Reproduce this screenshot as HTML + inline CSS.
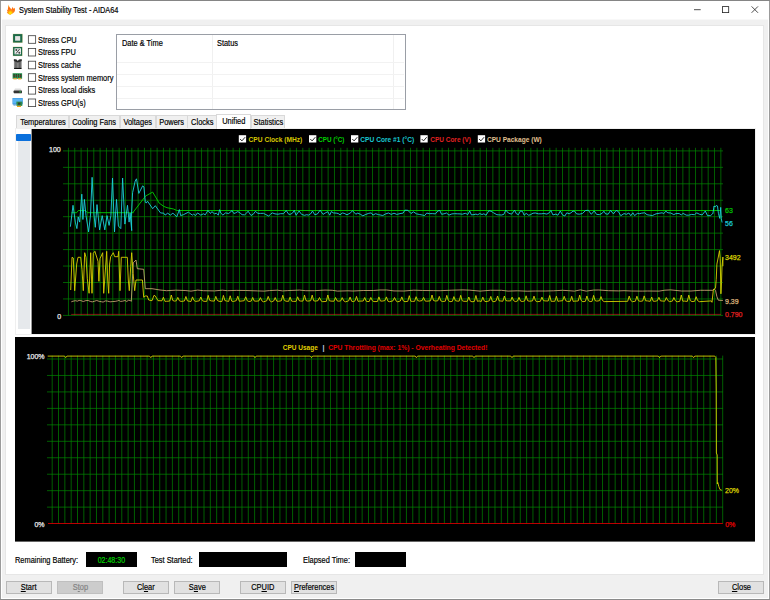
<!DOCTYPE html>
<html><head><meta charset="utf-8"><title>System Stability Test - AIDA64</title><style>
html,body{margin:0;padding:0}
body{width:770px;height:600px;position:relative;overflow:hidden;background:#f0f0f0;font-family:"Liberation Sans",sans-serif;font-size:8.2px;color:#000;-webkit-text-stroke:0.18px #000}
.a{position:absolute}
.t{position:absolute;white-space:nowrap;line-height:10px;height:10px;transform:scaleX(0.905);transform-origin:0 0}
.btn span,.tab span{display:inline-block;transform:scaleX(0.91);transform-origin:50% 50%}
.cb{position:absolute;width:6px;height:6px;border:1px solid #5a5a5a;background:#fff;box-sizing:content-box}
.btn{position:absolute;box-sizing:border-box;height:13px;top:581px;border:1px solid #b8b8b8;background:#e1e1e1;text-align:center;line-height:12.6px;white-space:nowrap}
.tab{position:absolute;box-sizing:border-box;top:115px;height:13px;border:1px solid #d9d9d9;border-bottom:none;background:#f0f0f0;text-align:center;line-height:13px;white-space:nowrap}
u{text-decoration:underline;text-decoration-thickness:0.7px;text-underline-offset:0.8px}
</style></head><body>
<div class="a" style="left:0;top:0;width:770px;height:600px;background:#9b9b9b"></div>
<div class="a" style="left:0;top:0;width:770px;height:1px;background:#858585"></div>
<div class="a" style="left:1px;top:1px;width:768px;height:598px;background:#fff"></div>
<div class="a" style="left:2px;top:19px;width:766px;height:1px;background:#f8f8f8"></div>
<div class="a" style="left:2px;top:20px;width:766px;height:578px;background:#f0f0f0"></div>
<div class="a" style="left:0;top:599px;width:770px;height:1px;background:#8a8a8a"></div>
<svg class="a" style="left:0;top:0" width="20" height="20" viewBox="0 0 20 20"><defs><radialGradient id="fl" gradientUnits="userSpaceOnUse" cx="10.3" cy="13" r="8"><stop offset="0" stop-color="#ffe800"/><stop offset="0.14" stop-color="#ffd400"/><stop offset="0.33" stop-color="#ff8a14"/><stop offset="0.6" stop-color="#ff6a14"/><stop offset="0.85" stop-color="#ff9a24"/><stop offset="1" stop-color="#ffb040"/></radialGradient></defs><path d="M8.1 4.6 L9.7 7.3 L11.4 9.4 L12.6 6.7 L13.4 8.7 L14.8 7.7 C15.1 9 15.1 10.2 14.8 11 C14.4 12.4 13 13.5 11.6 14 L10.2 14.9 C8.9 14.5 7.8 13.6 7.3 12.7 L6.8 12.4 L7.6 11.4 L6.8 9.6 L8 10 C7.7 8.4 8.4 6.4 8.1 4.6 Z" fill="url(#fl)"/></svg>
<div class="t" style="left:18.6px;top:6px;transform:scaleX(0.9)">System Stability Test - AIDA64</div>
<svg class="a" style="left:690px;top:2px" width="76" height="16" viewBox="0 0 76 16"><g stroke="#222" stroke-width="0.8" fill="none"><path d="M4 7.7H10.7"/><rect x="32.5" y="4.6" width="6.2" height="6"/><path d="M61.6 4.4L68 10.8M68 4.4L61.6 10.8"/></g></svg>
<div class="a" style="left:5px;top:25px;width:759px;height:550px;background:#fff;box-sizing:border-box;border:1px solid #e6e6e6"></div>
<svg class="a" style="left:0;top:0" width="130" height="112" viewBox="0 0 130 112"><rect x="12.8" y="33.8" width="9.8" height="9" fill="#d8c890"/><rect x="13.1" y="34.1" width="9.2" height="8.4" fill="#1c6a48"/><rect x="15.1" y="36.1" width="5.1" height="4.6" fill="#e4e4e4"/><rect x="12.8" y="46.7" width="9.6" height="9.4" fill="#d8c890"/><rect x="13.1" y="47" width="9" height="8.8" fill="#1c6a48"/><rect x="14.5" y="48.3" width="6.5" height="6" fill="#ececec"/><path d="M16 53.6L19.6 49" stroke="#333" stroke-width="0.9"/><circle cx="16.3" cy="50" r="1" fill="#444"/><circle cx="19.3" cy="52.8" r="1" fill="#444"/><defs><linearGradient id="cg" x1="0" x2="1" y1="0" y2="0"><stop offset="0" stop-color="#9a9a9a"/><stop offset="0.25" stop-color="#5e5e5e"/><stop offset="0.5" stop-color="#8a8a8a"/><stop offset="0.75" stop-color="#5a5a5a"/><stop offset="1" stop-color="#8c8c8c"/></linearGradient></defs><path d="M13.9 59.2 L16.4 60 L17.8 61.4 L19.2 60 L21.7 59.2 V68.6 H13.9Z" fill="url(#cg)"/><path d="M13.9 59.2 L16.6 59.4 L17.8 61 L19 59.4 L21.7 59.2 V60.9 L17.8 62.4 L13.9 60.9Z" fill="#2a2a2a"/><rect x="14.1" y="67.9" width="7.4" height="1.1" fill="#101010"/><rect x="12.6" y="73.2" width="9.5" height="5.6" fill="#2c9450"/><rect x="13.5" y="74.1" width="1.3" height="3.3" fill="#23402c"/><rect x="13.8" y="75" width="0.7" height="1.6" fill="#7a3028"/><rect x="15.7" y="74.1" width="1.3" height="3.3" fill="#23402c"/><rect x="16.0" y="75" width="0.7" height="1.6" fill="#7a3028"/><rect x="17.9" y="74.1" width="1.3" height="3.3" fill="#23402c"/><rect x="18.2" y="75" width="0.7" height="1.6" fill="#7a3028"/><rect x="20.1" y="74.1" width="1.3" height="3.3" fill="#23402c"/><rect x="20.4" y="75" width="0.7" height="1.6" fill="#7a3028"/><rect x="13.4" y="78" width="3.3" height="1.4" fill="#d9a63c"/><rect x="18" y="78" width="3.3" height="1.4" fill="#d9a63c"/><path d="M13.8 91 L15 88.6 H20.6 L21.9 91Z" fill="#dcdcdc"/><rect x="13.6" y="90.6" width="8.4" height="2.7" rx="0.7" fill="#333"/><rect x="19.3" y="91.3" width="1.8" height="1.2" fill="#2ea84a"/><rect x="14" y="93.2" width="7.6" height="0.6" fill="#bbb"/><rect x="12.5" y="98" width="10.2" height="6.4" fill="#2f8fe0"/><rect x="13" y="98.4" width="9.2" height="5.2" fill="#5ab4f4"/><path d="M13 104.4h3.2l-0.6 1h-2Z" fill="#3a86c8"/><rect x="16.4" y="101.6" width="5.9" height="4.3" fill="#2d8a4e"/><rect x="18" y="102.6" width="2.4" height="2.1" fill="#333c33"/><rect x="17" y="105.8" width="4" height="1.2" fill="#f0a418"/><rect x="28.35" y="35.70" width="7.3" height="7.6" fill="#fff" stroke="#3c3c3c" stroke-width="0.8"/><rect x="28.35" y="48.40" width="7.3" height="7.6" fill="#fff" stroke="#3c3c3c" stroke-width="0.8"/><rect x="28.35" y="61.20" width="7.3" height="7.6" fill="#fff" stroke="#3c3c3c" stroke-width="0.8"/><rect x="28.35" y="73.70" width="7.3" height="7.6" fill="#fff" stroke="#3c3c3c" stroke-width="0.8"/><rect x="28.35" y="86.50" width="7.3" height="7.6" fill="#fff" stroke="#3c3c3c" stroke-width="0.8"/><rect x="28.35" y="99.00" width="7.3" height="7.6" fill="#fff" stroke="#3c3c3c" stroke-width="0.8"/></svg>
<div class="t" style="left:37.6px;top:36px">Stress CPU</div>
<div class="t" style="left:37.6px;top:48px">Stress FPU</div>
<div class="t" style="left:37.6px;top:61px">Stress cache</div>
<div class="t" style="left:37.6px;top:74px">Stress system memory</div>
<div class="t" style="left:37.6px;top:86px">Stress local disks</div>
<div class="t" style="left:37.6px;top:99px">Stress GPU(s)</div>
<div class="a" style="left:116px;top:34px;width:290px;height:76px;box-sizing:border-box;border:1px solid #9a9ea6;background:#fff"></div>
<div class="a" style="left:212px;top:35px;width:1px;height:74px;background:#f0f0f0"></div>
<div class="a" style="left:393px;top:35px;width:1px;height:74px;background:#f0f0f0"></div>
<div class="a" style="left:117px;top:62px;width:287px;height:1px;background:#f2f2f2"></div>
<div class="a" style="left:117px;top:74px;width:287px;height:1px;background:#f2f2f2"></div>
<div class="a" style="left:117px;top:86px;width:287px;height:1px;background:#f2f2f2"></div>
<div class="a" style="left:117px;top:98px;width:287px;height:1px;background:#f2f2f2"></div>
<div class="t" style="left:122px;top:39px">Date &amp; Time</div>
<div class="t" style="left:217px;top:39px">Status</div>
<div class="a" style="left:15px;top:127.5px;width:741px;height:207px;box-sizing:border-box;border:1px solid #efefef;background:#fff"></div>
<div class="tab" style="left:16.4px;width:52.7px"><span>Temperatures</span></div>
<div class="tab" style="left:68.5px;width:51.9px"><span>Cooling Fans</span></div>
<div class="tab" style="left:119.8px;width:36.4px"><span>Voltages</span></div>
<div class="tab" style="left:155.6px;width:32.0px"><span>Powers</span></div>
<div class="tab" style="left:187.0px;width:30.2px"><span>Clocks</span></div>
<div class="tab" style="left:216.1px;width:35.0px;top:114px;height:14.5px;background:#fff;line-height:14.5px"><span>Unified</span></div>
<div class="tab" style="left:250.6px;width:34.7px"><span>Statistics</span></div>
<div class="a" style="left:18px;top:134px;width:12px;height:195px;background:#e6e9ec"></div>
<div class="a" style="left:16px;top:134px;width:15px;height:7px;background:#0b70dc;border-radius:0.8px"></div>
<svg class="a" style="left:0;top:0" width="770" height="600" viewBox="0 0 770 600">
<rect x="31.6" y="129" width="723.4" height="205" fill="#000"/>
<path d="M68.45 147.8V315.6M74.78 147.8V315.6M81.12 147.8V315.6M87.45 147.8V315.6M93.79 147.8V315.6M100.12 147.8V315.6M106.45 147.8V315.6M112.79 147.8V315.6M119.12 147.8V315.6M125.46 147.8V315.6M131.79 147.8V315.6M138.12 147.8V315.6M144.46 147.8V315.6M150.79 147.8V315.6M157.13 147.8V315.6M163.46 147.8V315.6M169.79 147.8V315.6M176.13 147.8V315.6M182.46 147.8V315.6M188.80 147.8V315.6M195.13 147.8V315.6M201.46 147.8V315.6M207.80 147.8V315.6M214.13 147.8V315.6M220.47 147.8V315.6M226.80 147.8V315.6M233.13 147.8V315.6M239.47 147.8V315.6M245.80 147.8V315.6M252.14 147.8V315.6M258.47 147.8V315.6M264.80 147.8V315.6M271.14 147.8V315.6M277.47 147.8V315.6M283.81 147.8V315.6M290.14 147.8V315.6M296.47 147.8V315.6M302.81 147.8V315.6M309.14 147.8V315.6M315.48 147.8V315.6M321.81 147.8V315.6M328.14 147.8V315.6M334.48 147.8V315.6M340.81 147.8V315.6M347.15 147.8V315.6M353.48 147.8V315.6M359.81 147.8V315.6M366.15 147.8V315.6M372.48 147.8V315.6M378.82 147.8V315.6M385.15 147.8V315.6M391.48 147.8V315.6M397.82 147.8V315.6M404.15 147.8V315.6M410.49 147.8V315.6M416.82 147.8V315.6M423.15 147.8V315.6M429.49 147.8V315.6M435.82 147.8V315.6M442.16 147.8V315.6M448.49 147.8V315.6M454.82 147.8V315.6M461.16 147.8V315.6M467.49 147.8V315.6M473.83 147.8V315.6M480.16 147.8V315.6M486.49 147.8V315.6M492.83 147.8V315.6M499.16 147.8V315.6M505.50 147.8V315.6M511.83 147.8V315.6M518.16 147.8V315.6M524.50 147.8V315.6M530.83 147.8V315.6M537.17 147.8V315.6M543.50 147.8V315.6M549.83 147.8V315.6M556.17 147.8V315.6M562.50 147.8V315.6M568.84 147.8V315.6M575.17 147.8V315.6M581.50 147.8V315.6M587.84 147.8V315.6M594.17 147.8V315.6M600.51 147.8V315.6M606.84 147.8V315.6M613.17 147.8V315.6M619.51 147.8V315.6M625.84 147.8V315.6M632.18 147.8V315.6M638.51 147.8V315.6M644.84 147.8V315.6M651.18 147.8V315.6M657.51 147.8V315.6M663.85 147.8V315.6M670.18 147.8V315.6M676.51 147.8V315.6M682.85 147.8V315.6M689.18 147.8V315.6M695.52 147.8V315.6M701.85 147.8V315.6M708.18 147.8V315.6M714.52 147.8V315.6M720.85 147.8V315.6M63 150.90H723M63 167.35H723M63 183.80H723M63 200.25H723M63 216.70H723M63 233.15H723M63 249.60H723M63 266.05H723M63 282.50H723M63 298.95H723M63 315.40H723" stroke="#008600" stroke-width="0.7" fill="none"/>
<path d="M71.2 314.4H721" stroke="#c82020" stroke-width="0.65" fill="none"/>
<polyline points="71.4,212.7 76.6,212.7 78.4,210.5 85.3,210.5 87.5,212.7 133.4,212.7 133.2,212.2 145.6,196.0 152.7,192.1 159.2,203.1 163.8,206.4 167.0,207.7 173.5,209.0 176.8,210.5 721.0,210.5" stroke="#00dc00" stroke-width="0.85" fill="none" stroke-linejoin="round"/>
<polyline points="70.4,226.7 73.0,205.3 75.3,222.1 76.9,228.6 78.2,216.9 79.7,222.1 81.8,194.2 82.9,219.5 84.4,199.4 86.0,215.6 88.6,231.9 90.5,215.0 92.1,177.3 94.0,215.0 95.3,227.3 97.0,204.6 99.6,229.9 102.2,215.6 104.8,229.9 107.0,215.6 109.1,225.4 110.9,215.6 112.5,178.0 114.5,231.9 116.5,199.4 118.4,226.0 120.8,228.6 122.6,178.0 124.9,224.1 127.5,205.3 129.1,222.1 130.1,213.1 131.7,230.6 131.3,218.1 132.6,192.7 135.2,181.0 136.5,178.8 138.8,193.4 142.7,185.8 143.9,186.9 145.3,201.8 146.2,203.1 147.5,201.2 152.7,208.7 155.3,205.7 160.5,212.9 163.8,213.2 165.1,215.1 167.7,213.2 170.3,215.1 172.9,213.2 176.8,216.8 179.4,209.6 180.6,215.5 183.2,214.8 188.4,212.2 192.3,215.1 193.6,214.2 195.6,215.5 197.5,212.9 200.8,215.1 203.4,213.8 205.3,214.8 207.9,210.5 210.5,213.5 211.8,211.6 214.4,213.8 216.4,213.2 218.3,215.2 219.6,209.7 220.9,213.2 222.9,215.1 225.5,212.9 228.7,213.5 232.1,210.6 233.8,213.5 235.5,212.9 237.8,211.6 240.1,213.0 242.1,214.7 244.6,214.8 246.3,213.4 248.1,211.2 251.0,215.5 253.6,213.9 255.3,211.4 258.0,213.4 260.5,213.4 263.4,213.3 265.9,214.6 268.7,216.0 270.5,214.3 272.3,212.9 275.0,213.9 278.0,214.2 280.6,213.7 283.5,213.7 286.2,210.5 288.8,214.4 290.8,214.1 292.5,213.1 294.3,210.4 296.1,215.3 299.1,211.0 301.6,214.4 304.5,215.3 306.7,214.7 308.5,215.1 310.5,214.0 312.5,211.0 314.7,214.7 317.4,214.0 320.1,210.2 323.0,214.4 325.2,213.0 327.8,211.7 329.7,215.2 331.4,211.5 333.2,212.9 336.2,213.1 338.2,213.5 340.0,214.8 342.3,213.0 344.1,213.3 347.0,214.8 350.1,213.1 352.6,210.8 355.8,214.2 357.8,213.1 360.6,214.4 362.8,215.8 365.9,214.4 368.8,213.3 371.3,212.9 372.9,215.1 375.6,213.7 378.7,214.7 380.9,215.1 382.8,215.5 385.9,213.8 388.5,213.0 391.2,214.4 394.0,213.2 396.8,214.4 400.0,213.6 403.1,213.1 404.9,210.2 407.8,210.3 411.0,213.5 413.4,211.8 416.6,213.9 419.7,214.5 422.6,215.1 424.7,215.5 426.7,213.1 429.7,213.7 432.3,213.6 435.4,213.9 437.8,211.0 439.7,210.4 441.6,214.3 444.0,213.8 446.5,213.0 449.0,215.1 451.9,213.9 454.7,213.7 457.3,213.8 460.0,213.9 462.3,214.2 465.3,213.3 467.8,214.5 469.7,211.0 471.4,214.9 474.0,214.6 475.9,214.1 477.7,214.7 479.7,213.6 482.0,214.5 483.9,213.8 486.0,215.2 488.8,210.8 491.1,211.2 493.7,212.9 496.9,214.7 498.7,214.8 501.5,215.0 503.8,214.4 505.8,210.1 508.3,213.0 510.0,213.7 511.7,214.1 514.6,210.3 516.3,213.7 518.4,214.7 520.5,210.9 522.5,211.5 524.1,215.2 526.2,213.4 528.6,215.2 530.2,214.8 533.0,213.2 535.4,213.0 538.3,213.8 541.2,213.8 543.9,213.5 546.9,214.1 549.1,212.9 550.9,210.5 552.9,214.9 555.9,214.1 557.9,215.2 560.3,211.0 562.3,214.7 564.8,216.0 566.8,212.8 569.1,213.8 571.0,212.8 573.0,211.1 574.7,211.3 576.6,213.9 579.4,214.2 582.4,213.5 585.6,210.5 588.3,210.3 591.3,214.3 594.2,210.9 596.6,214.4 599.5,214.6 602.2,213.3 603.9,211.2 605.6,213.9 608.2,214.2 610.6,210.4 613.4,213.9 616.1,210.5 618.1,211.3 620.8,215.7 624.0,213.6 626.4,214.3 628.9,213.0 630.8,215.7 632.9,212.8 634.6,215.6 637.3,213.4 639.7,213.7 641.5,213.2 644.7,212.8 647.0,214.7 649.3,215.1 652.4,215.5 654.2,214.7 656.1,213.8 659.1,213.3 662.1,212.8 663.7,213.7 665.8,211.2 667.9,212.8 670.7,213.0 673.8,214.6 675.9,213.6 679.1,213.5 681.3,214.9 683.1,213.4 686.2,215.1 688.6,215.2 691.7,214.4 694.4,214.7 696.8,212.9 699.6,214.3 702.2,214.9 705.3,211.0 707.5,215.7 710.6,215.6 712.7,213.6 712.9,213.8 714.0,206.0 715.2,206.9 716.1,205.5 717.5,206.0 718.4,213.3 719.8,218.4 720.7,207.4 721.3,218.8 722.1,222.5" stroke="#1cd0da" stroke-width="0.9" fill="none" stroke-linejoin="round"/>
<polyline points="71.3,301.8 73.0,301.2 75.5,300.7 77.3,301.2 79.1,300.4 80.8,300.6 83.3,301.5 85.8,300.6 88.2,300.5 90.3,301.4 92.2,301.9 94.3,301.3 96.7,300.5 99.3,301.4 101.3,301.7 103.1,302.1 105.2,300.9 107.5,301.1 109.2,301.6 110.8,301.8 112.6,301.5 115.2,301.4 117.4,300.9 118.9,300.4 120.5,301.4 122.5,301.2 125.0,300.5 126.8,301.5 128.3,300.3 130.2,300.5 131.3,301.3 132.7,273.3 133.3,262.7 136.0,260.0 137.3,268.7 143.7,269.3 145.3,288.7 152.0,288.7 160.0,290.0 166.6,290.7 175.7,290.2 185.1,290.5 191.0,291.1 197.7,290.1 203.4,290.7 214.5,290.9 222.3,290.2 227.4,290.7 236.3,290.4 245.8,290.5 257.4,290.9 264.1,291.1 269.4,290.6 277.3,290.2 282.7,290.9 287.8,290.6 299.4,290.1 305.8,290.7 314.3,290.7 325.0,290.1 332.2,290.3 337.5,291.1 348.0,290.8 353.0,291.0 363.2,290.5 373.4,290.5 380.0,290.0 386.6,290.0 394.0,290.9 403.9,291.0 413.8,290.2 422.7,290.5 433.2,290.6 440.1,290.7 451.9,290.2 463.0,289.9 469.8,290.2 480.0,291.1 490.3,290.3 501.4,290.3 508.1,291.1 517.5,290.8 527.2,291.2 535.5,291.0 545.3,291.0 553.4,290.8 562.4,290.3 568.9,290.7 574.4,291.1 580.4,289.9 586.2,291.1 593.6,290.1 598.8,290.0 608.6,290.7 618.5,290.9 624.0,290.7 631.5,291.0 642.3,291.1 647.7,291.0 659.1,291.1 664.9,290.2 670.7,289.9 681.6,291.0 691.0,291.0 700.5,290.3 704.2,290.3 712.7,290.3 714.1,288.9 715.5,290.3 716.9,296.7 718.3,300.2 722.9,300.5" stroke="#dcb47c" stroke-width="0.8" fill="none" stroke-linejoin="round"/>
<polyline points="70.7,290.0 72.0,257.3 73.3,258.0 74.7,290.7 76.7,264.0 78.0,257.3 80.7,257.3 82.0,269.3 83.3,290.7 84.7,252.7 86.0,257.3 87.3,278.7 89.1,293.3 90.7,252.7 92.0,293.3 93.3,253.3 94.9,251.3 98.0,261.3 98.9,281.3 100.0,258.7 102.7,252.7 103.7,293.3 104.7,280.0 106.7,251.3 107.7,280.0 108.7,293.3 109.6,264.0 110.7,256.7 113.3,252.7 114.7,256.7 118.0,256.7 118.7,251.3 120.0,290.7 121.3,257.3 127.3,257.3 128.3,280.0 129.3,290.7 130.7,266.7 131.7,252.7 133.1,273.3 134.7,290.7 136.0,280.0 142.4,280.0 143.7,297.3 145.3,296.0 147.3,296.0 148.7,300.0 152.0,300.7 154.0,295.3 155.3,296.0 158.0,300.7 160.0,300.7 161.9,300.8 163.4,297.2 164.9,301.3 166.6,301.3 169.8,301.0 171.3,295.0 172.8,300.5 174.5,301.1 176.3,300.8 177.8,297.4 179.3,300.7 181.0,301.4 184.4,301.0 185.9,296.5 187.4,300.9 189.1,301.2 191.0,301.5 192.5,296.9 194.0,300.5 195.7,301.4 199.3,300.8 200.8,297.0 202.3,300.6 204.0,301.3 206.7,301.4 208.2,295.4 209.7,300.4 211.4,300.9 214.3,301.1 215.8,296.4 217.3,300.4 219.0,301.3 221.9,301.5 223.4,295.4 224.9,300.6 226.6,301.0 228.7,301.4 230.2,295.8 231.7,301.1 233.4,301.5 236.3,300.6 237.8,296.2 239.3,301.2 241.0,301.1 244.2,300.7 245.7,296.8 247.2,300.7 248.9,301.5 251.2,301.1 252.7,297.4 254.2,301.0 255.9,301.2 258.9,300.9 260.4,297.6 261.9,300.9 263.6,301.8 266.7,300.8 268.2,296.4 269.7,300.6 271.4,301.8 273.7,301.0 275.2,297.5 276.7,301.1 278.4,301.3 281.3,300.8 282.8,295.2 284.3,300.4 286.0,301.2 288.6,301.3 290.1,297.1 291.6,301.1 293.3,301.4 296.1,301.3 297.6,296.8 299.1,300.6 300.8,301.1 303.0,301.0 304.5,295.1 306.0,300.6 307.7,301.1 310.7,300.7 312.2,295.1 313.7,300.8 315.4,301.1 318.0,300.7 319.5,297.5 321.0,300.8 322.7,301.7 326.3,301.4 327.8,295.0 329.3,300.7 331.0,301.1 334.0,301.2 335.5,297.5 337.0,300.8 338.7,301.2 340.7,300.9 342.2,297.6 343.7,300.8 345.4,301.8 348.6,300.9 350.1,297.1 351.6,301.2 353.3,301.6 355.0,300.9 356.5,296.4 358.0,301.3 359.7,301.1 363.2,301.0 364.7,297.5 366.2,301.2 367.9,301.6 369.3,301.4 370.8,297.4 372.3,300.7 374.0,301.6 377.4,301.5 378.9,296.9 380.4,301.0 382.1,301.1 384.9,300.6 386.4,296.9 387.9,301.2 389.6,301.7 393.0,300.8 394.5,297.5 396.0,300.9 397.7,301.8 400.3,301.0 401.8,296.9 403.3,300.9 405.0,301.7 407.8,301.3 409.3,295.7 410.8,301.2 412.5,301.4 414.6,301.3 416.1,296.7 417.6,300.5 419.3,301.1 422.1,300.6 423.6,297.4 425.1,301.0 426.8,301.2 430.5,300.8 432.0,295.0 433.5,300.5 435.2,301.0 437.8,300.8 439.3,296.4 440.8,300.8 442.5,301.5 445.3,301.2 446.8,295.4 448.3,300.5 450.0,301.7 452.4,301.3 453.9,296.6 455.4,300.6 457.1,301.1 459.2,301.1 460.7,295.3 462.2,300.7 463.9,301.3 467.3,301.3 468.8,297.0 470.3,301.1 472.0,301.8 474.4,301.4 475.9,295.5 477.4,301.3 479.1,300.9 481.3,301.5 482.8,297.1 484.3,301.0 486.0,301.7 489.3,300.8 490.8,296.4 492.3,301.2 494.0,301.8 496.1,300.8 497.6,296.0 499.1,300.8 500.8,301.0 502.9,301.2 504.4,296.0 505.9,300.6 507.6,300.9 510.6,300.9 512.1,297.1 513.6,300.6 515.3,301.6 517.5,301.0 519.0,297.3 520.5,301.0 522.2,301.5 524.6,301.0 526.1,295.8 527.6,300.7 529.3,301.2 532.5,300.9 534.0,296.1 535.5,300.8 537.2,301.7 540.4,301.3 541.9,297.1 543.4,300.6 545.1,300.9 548.2,301.0 549.7,295.5 551.2,301.3 552.9,301.3 554.9,301.2 556.4,296.2 557.9,301.3 559.6,301.0 562.7,300.7 564.2,296.3 565.7,300.7 567.4,301.4 570.2,301.3 571.7,296.3 573.2,301.4 574.9,301.1 578.2,301.0 579.7,295.1 581.2,300.5 582.9,301.7 585.4,301.3 586.9,296.0 588.4,300.6 590.1,301.6 592.1,301.3 593.6,295.4 595.1,300.6 596.8,301.1 599.5,300.7 601.0,296.6 602.5,300.6 604.2,301.6 627.7,301.3 629.2,296.1 630.7,300.4 632.4,301.7 635.4,301.2 636.9,296.2 638.4,300.7 640.1,301.3 642.7,301.0 644.2,295.9 645.7,300.8 647.4,300.9 650.2,301.3 651.7,297.0 653.2,301.2 654.9,301.3 657.4,300.7 658.9,297.3 660.4,300.8 662.1,301.0 664.8,301.2 666.3,297.5 667.8,300.5 669.5,301.6 672.4,301.1 673.9,297.5 675.4,300.8 677.1,301.8 679.8,301.3 681.3,295.0 682.8,301.2 684.5,301.1 687.3,301.4 688.8,295.1 690.3,300.6 692.0,301.6 694.6,301.3 696.1,296.7 697.6,300.6 699.3,301.7 711.3,300.9 712.0,302.3 713.4,289.6 715.5,288.2 716.2,279.7 716.9,264.1 718.3,257.0 719.5,250.6 720.2,258.4 720.9,293.8 721.5,282.5 722.0,266.9 722.9,257.0 722.9,266.2" stroke="#d8d000" stroke-width="0.9" fill="none" stroke-linejoin="round"/>
<text x="60.7" y="151.5" text-anchor="end" fill="#e8e8e8" stroke="#e8e8e8" font-family='"Liberation Sans", sans-serif' font-size="7" stroke-width="0.25" paint-order="stroke">100</text>
<text x="61.2" y="318.6" text-anchor="end" fill="#e8e8e8" stroke="#e8e8e8" font-family='"Liberation Sans", sans-serif' font-size="7" stroke-width="0.25" paint-order="stroke">0</text>
<text x="725" y="213.4" fill="#00c000" stroke="#00c000" font-family='"Liberation Sans", sans-serif' font-size="7" stroke-width="0.25" paint-order="stroke">63</text>
<text x="725" y="225.6" fill="#19c8d2" stroke="#19c8d2" font-family='"Liberation Sans", sans-serif' font-size="7" stroke-width="0.25" paint-order="stroke">56</text>
<text x="725" y="260.4" fill="#d8d000" stroke="#d8d000" font-family='"Liberation Sans", sans-serif' font-size="7" stroke-width="0.25" paint-order="stroke">3492</text>
<text x="725" y="303.6" fill="#dcb47c" stroke="#dcb47c" font-family='"Liberation Sans", sans-serif' font-size="7" stroke-width="0.25" paint-order="stroke">9.39</text>
<text x="725" y="317.4" fill="#e02020" stroke="#e02020" font-family='"Liberation Sans", sans-serif' font-size="7" stroke-width="0.25" paint-order="stroke">0.790</text>
<rect x="238.8" y="135.2" width="7.3" height="7.3" fill="#fff"/>
<path d="M240.1 139.0l1.8 1.9l3.2 -3.7" stroke="#222" stroke-width="0.95" fill="none"/>
<text x="248.6" y="141.6" fill="#d8c800" font-family='"Liberation Sans", sans-serif' font-size="7.4" font-weight="bold" textLength="53.6" lengthAdjust="spacingAndGlyphs">CPU Clock (MHz)</text>
<rect x="309.0" y="135.2" width="7.3" height="7.3" fill="#fff"/>
<path d="M310.3 139.0l1.8 1.9l3.2 -3.7" stroke="#222" stroke-width="0.95" fill="none"/>
<text x="318.2" y="141.6" fill="#00d000" font-family='"Liberation Sans", sans-serif' font-size="7.4" font-weight="bold" textLength="26.2" lengthAdjust="spacingAndGlyphs">CPU (°C)</text>
<rect x="351.0" y="135.2" width="7.3" height="7.3" fill="#fff"/>
<path d="M352.3 139.0l1.8 1.9l3.2 -3.7" stroke="#222" stroke-width="0.95" fill="none"/>
<text x="360.3" y="141.6" fill="#19c8d2" font-family='"Liberation Sans", sans-serif' font-size="7.4" font-weight="bold" textLength="53.9" lengthAdjust="spacingAndGlyphs">CPU Core #1 (°C)</text>
<rect x="420.4" y="135.2" width="7.3" height="7.3" fill="#fff"/>
<path d="M421.7 139.0l1.8 1.9l3.2 -3.7" stroke="#222" stroke-width="0.95" fill="none"/>
<text x="430.2" y="141.6" fill="#e02020" font-family='"Liberation Sans", sans-serif' font-size="7.4" font-weight="bold" textLength="40.8" lengthAdjust="spacingAndGlyphs">CPU Core (V)</text>
<rect x="477.8" y="135.2" width="7.3" height="7.3" fill="#fff"/>
<path d="M479.1 139.0l1.8 1.9l3.2 -3.7" stroke="#222" stroke-width="0.95" fill="none"/>
<text x="486.9" y="141.6" fill="#e0c090" font-family='"Liberation Sans", sans-serif' font-size="7.4" font-weight="bold" textLength="54.9" lengthAdjust="spacingAndGlyphs">CPU Package (W)</text>
</svg>
<svg class="a" style="left:0;top:0" width="770" height="600" viewBox="0 0 770 600">
<rect x="15" y="337" width="740" height="204.6" fill="#000"/>
<path d="M52.20 355.6V523.6M58.53 355.6V523.6M64.85 355.6V523.6M71.18 355.6V523.6M77.50 355.6V523.6M83.83 355.6V523.6M90.15 355.6V523.6M96.48 355.6V523.6M102.80 355.6V523.6M109.13 355.6V523.6M115.45 355.6V523.6M121.78 355.6V523.6M128.11 355.6V523.6M134.43 355.6V523.6M140.76 355.6V523.6M147.08 355.6V523.6M153.41 355.6V523.6M159.73 355.6V523.6M166.06 355.6V523.6M172.38 355.6V523.6M178.71 355.6V523.6M185.04 355.6V523.6M191.36 355.6V523.6M197.69 355.6V523.6M204.01 355.6V523.6M210.34 355.6V523.6M216.66 355.6V523.6M222.99 355.6V523.6M229.31 355.6V523.6M235.64 355.6V523.6M241.96 355.6V523.6M248.29 355.6V523.6M254.62 355.6V523.6M260.94 355.6V523.6M267.27 355.6V523.6M273.59 355.6V523.6M279.92 355.6V523.6M286.24 355.6V523.6M292.57 355.6V523.6M298.89 355.6V523.6M305.22 355.6V523.6M311.55 355.6V523.6M317.87 355.6V523.6M324.20 355.6V523.6M330.52 355.6V523.6M336.85 355.6V523.6M343.17 355.6V523.6M349.50 355.6V523.6M355.82 355.6V523.6M362.15 355.6V523.6M368.47 355.6V523.6M374.80 355.6V523.6M381.13 355.6V523.6M387.45 355.6V523.6M393.78 355.6V523.6M400.10 355.6V523.6M406.43 355.6V523.6M412.75 355.6V523.6M419.08 355.6V523.6M425.40 355.6V523.6M431.73 355.6V523.6M438.06 355.6V523.6M444.38 355.6V523.6M450.71 355.6V523.6M457.03 355.6V523.6M463.36 355.6V523.6M469.68 355.6V523.6M476.01 355.6V523.6M482.33 355.6V523.6M488.66 355.6V523.6M494.98 355.6V523.6M501.31 355.6V523.6M507.64 355.6V523.6M513.96 355.6V523.6M520.29 355.6V523.6M526.61 355.6V523.6M532.94 355.6V523.6M539.26 355.6V523.6M545.59 355.6V523.6M551.91 355.6V523.6M558.24 355.6V523.6M564.57 355.6V523.6M570.89 355.6V523.6M577.22 355.6V523.6M583.54 355.6V523.6M589.87 355.6V523.6M596.19 355.6V523.6M602.52 355.6V523.6M608.84 355.6V523.6M615.17 355.6V523.6M621.50 355.6V523.6M627.82 355.6V523.6M634.15 355.6V523.6M640.47 355.6V523.6M646.80 355.6V523.6M653.12 355.6V523.6M659.45 355.6V523.6M665.77 355.6V523.6M672.10 355.6V523.6M678.42 355.6V523.6M684.75 355.6V523.6M691.08 355.6V523.6M697.40 355.6V523.6M703.73 355.6V523.6M710.05 355.6V523.6M716.38 355.6V523.6M722.70 355.6V523.6M47 359.00H723M47 375.46H723M47 391.92H723M47 408.38H723M47 424.84H723M47 441.30H723M47 457.76H723M47 474.22H723M47 490.68H723M47 507.14H723" stroke="#008600" stroke-width="0.7" fill="none"/>
<path d="M48 523.5H722.8" stroke="#d00000" stroke-width="0.9" fill="none"/>
<polyline points="47.7,356.1 64.5,356.1 65.7,357.6 66.9,356.1 149.6,356.1 150.8,357.6 152.0,356.1 180.5,356.1 181.7,357.6 182.9,356.1 253.8,356.1 255.0,357.6 256.2,356.1 310.3,356.1 311.5,357.6 312.7,356.1 415.2,356.1 416.4,357.6 417.6,356.1 472.8,356.1 474.0,357.6 475.2,356.1 510.8,356.1 512.0,357.6 513.2,356.1 658.3,356.1 659.5,357.6 660.7,356.1 692.4,356.1 693.6,357.6 694.8,356.1 714.8,356.1 715.8,357.5 716.2,390.0 716.4,453.0 717.2,455.0 717.3,484.0 717.8,482.5 718.8,486.5 720.0,489.6 721.8,490.2" stroke="#d8d000" stroke-width="0.9" fill="none"/>
<text x="44.6" y="359" text-anchor="end" fill="#e8e8e8" stroke="#e8e8e8" font-family='"Liberation Sans", sans-serif' font-size="7" stroke-width="0.25" paint-order="stroke">100%</text>
<text x="44.6" y="526.8" text-anchor="end" fill="#e8e8e8" stroke="#e8e8e8" font-family='"Liberation Sans", sans-serif' font-size="7" stroke-width="0.25" paint-order="stroke">0%</text>
<text x="725" y="492.9" fill="#d8d000" stroke="#d8d000" font-family='"Liberation Sans", sans-serif' font-size="7" stroke-width="0.25" paint-order="stroke">20%</text>
<text x="725.2" y="526.8" fill="#e00000" stroke="#e00000" font-family='"Liberation Sans", sans-serif' font-size="7" stroke-width="0.25" paint-order="stroke">0%</text>
<text x="282.8" y="349.9" fill="#e0d000" font-family='"Liberation Sans", sans-serif' font-size="7.1" font-weight="bold" textLength="35" lengthAdjust="spacingAndGlyphs">CPU Usage</text>
<text x="322.4" y="349.7" fill="#c8d0e0" font-family='"Liberation Sans", sans-serif' font-size="7.1" font-weight="bold">|</text>
<text x="328.2" y="349.9" fill="#e00000" font-family='"Liberation Sans", sans-serif' font-size="7.1" font-weight="bold" textLength="159.2" lengthAdjust="spacingAndGlyphs">CPU Throttling (max: 1%) - Overheating Detected!</text>
</svg>
<div class="t" style="left:15.4px;top:556px">Remaining Battery:</div>
<div class="a" style="left:86px;top:552px;width:50.7px;height:15px;background:#000"></div>
<div class="t" style="left:86px;width:50.7px;text-align:center;top:556px;color:#00d800;-webkit-text-stroke:0.18px #00d800;transform:scaleX(0.86);transform-origin:50% 50%">02:48:30</div>
<div class="t" style="left:151.4px;top:556px">Test Started:</div>
<div class="a" style="left:199px;top:552px;width:88px;height:15px;background:#000"></div>
<div class="t" style="left:302.6px;top:556px">Elapsed Time:</div>
<div class="a" style="left:355.2px;top:552px;width:50.8px;height:15px;background:#000"></div>
<div class="btn" style="left:6.0px;width:46.0px;"><span><u>S</u>tart</span></div>
<div class="btn" style="left:57.0px;width:46.0px;background:#cccccc;border-color:#bfbfbf;color:#838383;-webkit-text-stroke:0.18px #838383;"><span>S<u>t</u>op</span></div>
<div class="btn" style="left:123.0px;width:46.0px;"><span>Cl<u>e</u>ar</span></div>
<div class="btn" style="left:174.0px;width:46.0px;"><span>S<u>a</u>ve</span></div>
<div class="btn" style="left:240.0px;width:46.0px;"><span>CP<u>U</u>ID</span></div>
<div class="btn" style="left:291.0px;width:46.0px;"><span><u>P</u>references</span></div>
<div class="btn" style="left:718.0px;width:46.0px;"><span><u>C</u>lose</span></div>
</body></html>
